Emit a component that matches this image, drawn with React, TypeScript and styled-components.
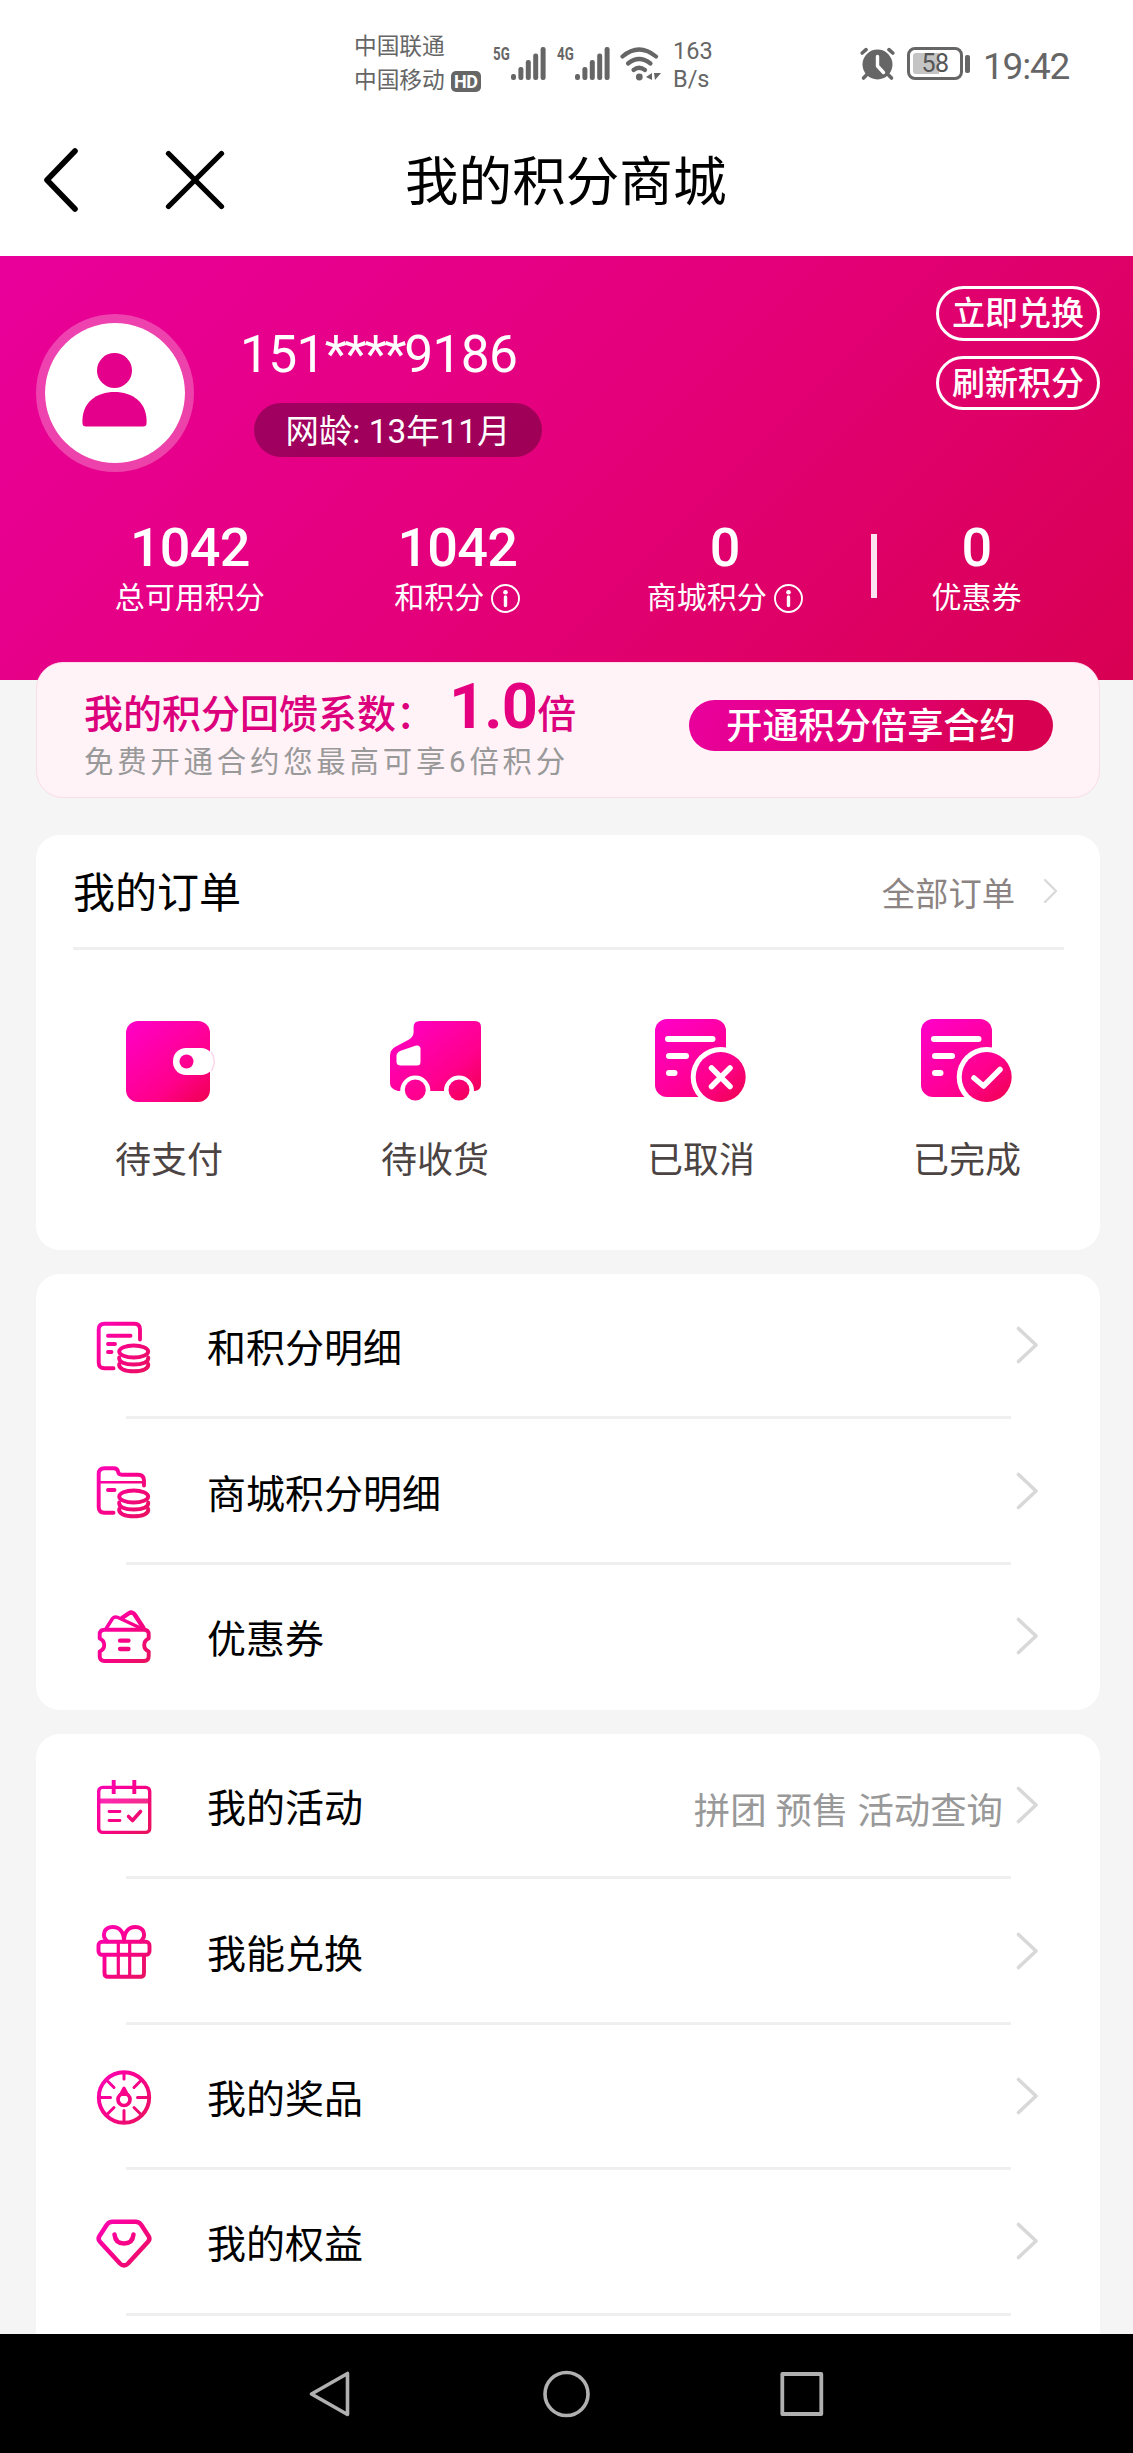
import React, { useId } from "react";
import styled, { createGlobalStyle } from "styled-components";

const GlobalStyle = createGlobalStyle`
  * { box-sizing: border-box; }
  body {
    margin: 0;
    background: #f5f5f5;
    font-family: Roboto, "Noto Sans CJK SC", sans-serif;
  }
  svg { display: block; flex: none; }
`;

const Page = styled.div`
  width: 1133px;
  height: 2453px;
  display: flex;
  flex-direction: column;
  overflow: hidden;
  background: #f5f5f5;
`;

/* ---------- status bar ---------- */

const StatusBar = styled.div`
  height: 127px;
  flex: none;
  display: flex;
  align-items: center;
  padding-left: 354px;
  background: #fff;
  color: #666;
`;

const Carriers = styled.div`
  width: 127px;
  padding-top: 1px;
  font-size: 22.7px;
  line-height: 34px;
`;

const CarrierLine = styled.div`
  display: flex;
  align-items: center;
  gap: 6px;
  white-space: nowrap;
`;

const HdBadge = styled.span`
  width: 30px;
  height: 21px;
  border-radius: 5px;
  background: #666;
  color: #fff;
  font: 700 18px/21px Roboto, sans-serif;
  letter-spacing: -0.5px;
  text-align: center;
`;

const Signal = styled.div<{ $left: number }>`
  display: flex;
  align-items: flex-start;
  height: 33px;
  margin-left: ${(p) => p.$left}px;
`;

const NetType = styled.span`
  width: 18px;
  font: 700 19px/14px Roboto, sans-serif;
  white-space: nowrap;
  transform: scaleX(0.7);
  transform-origin: left center;
`;

const WifiBox = styled.div`
  margin-left: 9px;
`;

const Speed = styled.div`
  width: 60px;
  margin-left: 12px;
  padding-top: 2px;
  font-size: 23.5px;
  line-height: 28px;
  font-weight: 400;
`;

const StatusRight = styled.div`
  display: flex;
  align-items: center;
  margin-left: 127px;
`;

const Battery = styled.div`
  width: 56px;
  height: 33px;
  margin-left: 12px;
  border: 3px solid #666;
  border-radius: 8px;
  padding: 3px;
`;

const BatteryFill = styled.div`
  width: 100%;
  height: 21px;
  border-radius: 3px;
  background: linear-gradient(90deg, #c4c4c4 58%, transparent 58%);
  color: #555;
  font-size: 25px;
  line-height: 22px;
  font-weight: 400;
  text-align: center;
  letter-spacing: -0.5px;
`;

const BatteryNub = styled.div`
  width: 5px;
  height: 18px;
  margin-left: 2px;
  border-radius: 2px;
  background: #666;
`;

const Clock = styled.div`
  margin-left: 13px;
  font-size: 37px;
  line-height: 40px;
  padding-top: 6px;
  letter-spacing: -1.2px;
`;

/* ---------- title bar ---------- */

const TitleBar = styled.header`
  height: 129px;
  flex: none;
  display: flex;
  align-items: center;
  padding: 0 0 23px 40px;
  background: #fff;
`;

const Title = styled.h1`
  margin: 0 0 0 177px;
  padding-top: 5px;
  font-size: 53.6px;
  line-height: 60px;
  font-weight: 400;
  color: #000;
`;

const CloseSlot = styled.div`
  margin-left: 80px;
`;

/* ---------- hero ---------- */

const Hero = styled.section`
  height: 424px;
  flex: none;
  background: linear-gradient(135deg, #e9009b 0%, #e4007a 50%, #d80052 100%);
  color: #fff;
`;

const Profile = styled.div`
  height: 255px;
  display: flex;
  align-items: flex-start;
  padding: 30px 33px 0 36px;
`;

const Avatar = styled.div`
  width: 158px;
  height: 158px;
  margin-top: 28px;
  border-radius: 50%;
  border: 9.5px solid rgba(255, 255, 255, 0.26);
  background: #fff;
  background-clip: padding-box;
`;

const Info = styled.div`
  margin: 41px 0 0 46px;
`;

const Phone = styled.div`
  padding-top: 1px;
  height: 54px;
  font-size: 51.5px;
  line-height: 54px;
  letter-spacing: -0.7px;
  white-space: nowrap;
`;

const Stars = styled.span`
  letter-spacing: -2.3px;
`;

const AgePill = styled.div`
  width: 288px;
  height: 54px;
  margin: 22px 0 0 14px;
  padding-top: 2px;
  border-radius: 27px;
  background: rgba(0, 0, 0, 0.3);
  font-size: 33.4px;
  line-height: 54px;
  text-align: center;
  white-space: nowrap;
`;

const Actions = styled.div`
  margin-left: auto;
  display: flex;
  flex-direction: column;
  gap: 15px;
`;

const OutlineButton = styled.button`
  width: 164px;
  height: 54.5px;
  padding: 2px 0 0;
  border: 3px solid #fff;
  border-radius: 28px;
  background: none;
  color: #fff;
  font: 500 33px/46px Roboto, "Noto Sans CJK SC", sans-serif;
`;

const Stats = styled.div`
  display: flex;
  padding-left: 56px;
`;

const Stat = styled.div<{ $width: number }>`
  width: ${(p) => p.$width}px;
  display: flex;
  flex-direction: column;
  align-items: center;
`;

const StatValue = styled.div`
  height: 70px;
  padding-top: 1px;
  font-size: 54px;
  line-height: 71px;
  font-weight: 500;
  letter-spacing: -0.8px;
`;

const StatLabel = styled.div`
  display: flex;
  align-items: center;
  gap: 7px;
  font-size: 30px;
  line-height: 34px;
`;

const StatDivider = styled.div`
  width: 6px;
  height: 64px;
  margin: 23px 0 0 12px;
  background: #fbe3f0;
`;

/* ---------- ratio card ---------- */

const RatioCard = styled.section`
  height: 136px;
  flex: none;
  margin: -18px 33px 0 36px;
  padding: 0 47px 0 47px;
  display: flex;
  justify-content: space-between;
  border: 1px solid #fbdcea;
  border-radius: 27px;
  background: #fff3f8;
`;

const RatioTitle = styled.div`
  height: 79px;
  display: flex;
  align-items: baseline;
  padding-top: 14px;
  color: #dc007d;
  font-size: 39px;
  line-height: 66px;
  font-weight: 500;
  white-space: nowrap;
`;

const RatioValue = styled.strong`
  margin-left: 14px;
  font-size: 63px;
  line-height: 60px;
  letter-spacing: -0.8px;
  font-weight: 700;
  color: #e4007f;
`;

const RatioNote = styled.div`
  padding-top: 1px;
  font-size: 29.4px;
  line-height: 38px;
  letter-spacing: 3.8px;
  color: #999;
  white-space: nowrap;
`;

const RatioButton = styled.button`
  width: 364px;
  height: 51px;
  margin-top: 37px;
  margin-right: -1px;
  padding: 3px 0 0;
  border: 0;
  border-radius: 26px;
  background: linear-gradient(110deg, #e9009d 0%, #e2007a 50%, #d80050 80%);
  color: #fff;
  font: 500 36.2px/48px Roboto, "Noto Sans CJK SC", sans-serif;
`;

/* ---------- cards ---------- */

const Card = styled.section<{ $top: number; $height: number; $open?: boolean }>`
  height: ${(p) => p.$height}px;
  flex: none;
  margin: ${(p) => p.$top}px 33px 0 36px;
  border-radius: ${(p) => (p.$open ? "24px 24px 0 0" : "24px")};
  background: #fff;
  overflow: hidden;
`;

const OrdersHead = styled.div`
  height: 115px;
  margin: 0 36px 0 37px;
  padding-right: 5px;
  display: flex;
  align-items: center;
  border-bottom: 3px solid #efefef;
`;

const OrdersTitle = styled.h2`
  margin: 0 auto 0 0;
  padding-top: 5px;
  font-size: 42px;
  line-height: 60px;
  font-weight: 400;
  color: #000;
`;

const OrdersAll = styled.span`
  padding-top: 7px;
  margin-right: 28px;
  font-size: 33.3px;
  line-height: 48px;
  color: #8b8483;
`;

const OrdersGrid = styled.div`
  display: grid;
  grid-template-columns: repeat(4, 1fr);
  padding-top: 62px;
`;

const OrderItem = styled.div`
  display: flex;
  flex-direction: column;
  align-items: center;
  color: #4c4443;
  font-size: 36px;
  line-height: 48px;
  gap: 29px;
`;

const Row = styled.div`
  position: relative;
  height: 145.4px;
  display: flex;
  align-items: center;
  padding: 0 61px 3px 57px;
`;

const Rule = styled.div`
  position: absolute;
  left: 90px;
  right: 89px;
  bottom: 0;
  height: 3px;
  background: #efefef;
`;

const RowLabel = styled.div`
  margin: 8px auto 0 54px;
  font-size: 39px;
  line-height: 56px;
  color: #000;
`;

const RowNote = styled.div`
  margin: 14px 12px 0 0;
  font-size: 36.4px;
  line-height: 50px;
  color: #999;
  white-space: pre;
`;

/* ---------- system navigation ---------- */

const SystemNav = styled.nav`
  height: 119px;
  margin-top: auto;
  flex: none;
  display: flex;
  align-items: center;
  justify-content: center;
  gap: 187px;
  background: #000;
`;

/* ---------- icons ---------- */

const SignalBars = () => (
  <svg width="36" height="33" viewBox="0 0 36 33" fill="#666">
    <rect x="0" y="27" width="5" height="6" rx="2.2" />
    <rect x="7.4" y="20" width="5" height="13" rx="2.2" />
    <rect x="14.8" y="13" width="5" height="20" rx="2.2" />
    <rect x="22.2" y="6.500" width="5" height="26.500" rx="2.2" />
    <rect x="29.6" y="0" width="5" height="33" rx="2.2" />
  </svg>
);

const WifiIcon = () => (
  <svg width="41" height="34" viewBox="0 0 41 34" fill="none" stroke="#666" strokeWidth="4.200" strokeLinecap="round">
    <path d="M2.500 9.500Q19 -4.500 36 9.500" />
    <path d="M8 16.500Q19 7.500 30.500 16.500" />
    <path d="M13.500 23Q19 18.500 25 23" />
    <circle cx="19.300" cy="30" r="3.400" fill="#666" stroke="none" />
    <path d="M32 26v7l-6-3zM34 26h7l-6 7z" fill="#666" stroke="none" />
  </svg>
);

const AlarmIcon = () => (
  <svg width="35" height="34" viewBox="0 0 35 34" fill="none" stroke="#666" strokeLinecap="round">
    <circle cx="17.500" cy="17.500" r="15" fill="#666" stroke="none" />
    <path d="M2.200 6 6 2.700M32.800 6 29 2.700" strokeWidth="3.600" />
    <path d="M6.500 28 3.500 31M28.500 28l3 3" strokeWidth="3.600" />
    <path d="M17.500 9.500v9.500l6 6.500" stroke="#fff" strokeWidth="3.400" strokeLinejoin="round" />
  </svg>
);

const BackIcon = () => (
  <svg width="42" height="70" viewBox="0 0 42 70" fill="none" stroke="#000" strokeWidth="5.600" strokeLinecap="round" strokeLinejoin="round">
    <path d="M35 6 7 35l28 29" />
  </svg>
);

const CloseIcon = () => (
  <svg width="66" height="66" viewBox="0 0 66 66" fill="none" stroke="#000" strokeWidth="5.300" strokeLinecap="round">
    <path d="M6.500 6.500l53 53M59.500 6.500l-53 53" />
  </svg>
);

const PersonIcon = () => (
  <svg width="139" height="139" viewBox="0 0 139 139" fill="#e4008a">
    <circle cx="69.500" cy="47.500" r="17.500" />
    <path d="M37.500 101C36 79 52 69 69.500 69S103 79 101.500 101Q101 103.500 98 103.500H41Q38 103.500 37.500 101Z" />
  </svg>
);

const InfoIcon = () => (
  <svg width="29" height="29" viewBox="0 0 29 29" fill="none" stroke="#fff">
    <circle cx="14.500" cy="14.500" r="13.500" strokeWidth="1.900" />
    <circle cx="14.500" cy="8.200" r="2.300" fill="#fff" stroke="none" />
    <path d="M14.500 13v8.500" strokeWidth="3.400" strokeLinecap="round" />
  </svg>
);

const Chevron = ({ small }: { small?: boolean }) =>
  small ? (
    <svg width="16" height="26" viewBox="0 0 16 26" fill="none" stroke="#dadada" strokeWidth="2.400" strokeLinecap="round" strokeLinejoin="round">
      <path d="M2 2l11 11L2 24" />
    </svg>
  ) : (
    <svg width="24" height="38" viewBox="0 0 24 38" fill="none" stroke="#d8d8d8" strokeWidth="3.600" strokeLinecap="round" strokeLinejoin="round">
      <path d="M3.500 2.500 21 19 3.500 35.500" />
    </svg>
  );

type Glyph = (paint: string) => React.ReactNode;

const SolidIcon = ({ glyph }: { glyph: Glyph }) => {
  const id = useId();
  return (
    <svg width="96" height="96" viewBox="0 0 96 96">
      <defs>
        <linearGradient id={id} gradientUnits="userSpaceOnUse" x1="15" y1="8" x2="86" y2="92">
          <stop offset="0" stopColor="#ff00c4" />
          <stop offset="0.65" stopColor="#ff008c" />
          <stop offset="1" stopColor="#f00050" />
        </linearGradient>
      </defs>
      {glyph(`url(#${id})`)}
    </svg>
  );
};

const wallet: Glyph = (paint) => (
  <>
    <rect x="5" y="9" width="84" height="81" rx="12" fill={paint} />
    <rect x="52" y="36" width="41" height="27" rx="13" fill="#fff" />
    <path d="M90.500 40Q96 49.500 90.500 59" fill="none" stroke="#fbd9ec" strokeWidth="1.500" />
    <circle cx="65.500" cy="49.500" r="7" fill={paint} />
  </>
);

const truck: Glyph = (paint) => (
  <>
    <path d="M33 9H88Q94 9 94 15V72Q94 78 88 79H11Q3 77 3 71V44Q3 38 8 35L22 27.500Q26.600 25 26.600 20V15Q26.600 9 33 9Z" fill={paint} />
    <path d="M9.500 43Q10 40.500 13 39L29 33.500Q33.500 33 33.500 37V50Q33.500 53.500 30 53.500H13Q9.500 53 9.500 50Z" fill="#fff" />
    <circle cx="28.300" cy="78.500" r="15" fill="#fff" />
    <circle cx="72" cy="78.500" r="15" fill="#fff" />
    <circle cx="28.300" cy="78" r="10.500" fill={paint} />
    <circle cx="72" cy="78" r="10.500" fill={paint} />
  </>
);

const order = (mark: string): Glyph => (paint) => (
  <>
    <rect x="2" y="7" width="71" height="78" rx="12" fill={paint} />
    <path d="M15 27h44.500M16 44h17M16 61h5.500" stroke="#fff" strokeWidth="6" strokeLinecap="round" />
    <circle cx="67.700" cy="65" r="30" fill="#fff" />
    <circle cx="67.700" cy="65" r="25" fill={paint} />
    <path d={mark} fill="none" stroke="#fff" strokeWidth="5.500" strokeLinecap="round" strokeLinejoin="round" />
  </>
);

const LineIcon = ({ glyph, weight = 3.9 }: { glyph: React.ReactNode; weight?: number }) => {
  const id = useId();
  return (
    <IconSlot>
      <svg
        width="60"
        height="60"
        viewBox="0 0 60 60"
        fill="none"
        stroke={`url(#${id})`}
        strokeWidth={weight}
        strokeLinecap="round"
        strokeLinejoin="round"
      >
        <defs>
          <linearGradient id={id} gradientUnits="userSpaceOnUse" x1="4" y1="10" x2="56" y2="54">
            <stop offset="0" stopColor="#fb06b4" />
            <stop offset="0.4" stopColor="#fb0090" />
            <stop offset="1" stopColor="#e8125e" />
          </linearGradient>
        </defs>
        {glyph}
      </svg>
    </IconSlot>
  );
};

const IconSlot = styled.div`
  padding-top: 3px;
`;

const coins = (
  <>
    <ellipse cx="40.700" cy="34.500" rx="14.500" ry="6" />
    <path d="M26.200 40.500c-.8 4.500 5.800 7 14.500 7s15.300-2.500 14.500-7" />
    <path d="M26.200 47c-.8 4.800 5.800 7.300 14.500 7.300s15.300-2.500 14.500-7.300" />
  </>
);

const pointsDoc = (
  <>
    <path d="M20.500 51.300H11.500Q5.700 51.300 5.700 45.500V12.500Q5.700 6.700 11.500 6.700H41.500Q47 6.700 47 12.500V22.500" />
    <path d="M15 18.700H37.500M15 27H22M15 35H18.500" />
    {coins}
  </>
);

const pointsFolder = (
  <>
    <path d="M20.500 50.700H11.500Q5.700 50.700 5.700 45V12Q5.700 6.300 11.500 6.300H20.500Q24.500 6.300 25 9.500T29 12.700H45Q51 12.700 51 18.500V23.500" />
    <path d="M6 20.300H50" strokeWidth="2.600" />
    <path d="M15 28H21.500" />
    {coins}
  </>
);

const coupon = (
  <>
    <path d="M11.500 22.700H51Q55.700 22.700 55.700 27.500V31.500Q51.200 33.500 51.200 38T55.700 44.500V49Q55.700 54 51 54H11.500Q6.700 54 6.700 49V44.500Q11.200 42.500 11.200 38T6.700 31.500V27.500Q6.700 22.700 11.500 22.700Z" />
    <path d="M27 33.700H35.500M27 42H35.500" strokeWidth="4.300" />
    <path d="M13.500 21 19.500 11.500Q21.500 9 25 10.500L48.500 21.500" strokeWidth="3.500" />
    <path d="M29 11 35.500 6.500Q39.500 4 42 8L50.500 21" strokeWidth="4.400" />
  </>
);

const calendar = (
  <>
    <rect x="5.700" y="10.400" width="51" height="45" rx="4" strokeWidth="3.400" />
    <path d="M6 24H56" strokeWidth="4.800" strokeOpacity="0.85" strokeLinecap="butt" />
    <path d="M20.700 3V17M41.300 3V17" strokeLinecap="butt" />
    <path d="M16 34.500H27M16 43.500H27" strokeWidth="2.800" />
    <path d="M35.500 39.500 39.500 43.500 47.500 34.500" strokeWidth="3.600" />
  </>
);

const gift = (
  <>
    <rect x="5.500" y="19.800" width="51" height="13" rx="3.500" />
    <path d="M11.500 33V51Q11.500 54.800 15 54.800H47.500Q51 54.800 51 51V33" />
    <path d="M25.300 20V54M36.700 20V54" strokeWidth="3.200" />
    <path d="M14.500 19.500C8 14 11 5 19.500 5S31 12 31 19.500C31 12 34 5 42.500 5S54 14 47.500 19.500" />
  </>
);

const wheel = (
  <>
    <circle cx="31" cy="30.500" r="25.200" />
    <path
      d="M31 6V12M31 55V43.500M6 30.500H17.500M56 30.500H44.500M13.500 13 21 20.500M48.500 13 41 20.500M13.500 48 21 40.500M48.500 48 41 40.500"
      strokeWidth="3"
    />
    <circle cx="31" cy="32.500" r="6" strokeWidth="3.700" />
    <path d="M31 21 27.500 27.500H34.500Z" strokeWidth="3" fill="#f5068a" />
  </>
);

const diamond = (
  <>
    <path d="M19.500 8.800H42.500Q46 8.800 48 11.500L55.500 23Q57.500 26 55 28.800L35 50.500Q31 54.500 27 50.500L7 28.800Q4.500 26 6.500 23L14 11.500Q16 8.800 19.500 8.800Z" />
    <path d="M21.500 21.500Q22.500 30.500 31 30.500T40.500 21.500" />
  </>
);

/* ---------- data ---------- */

const orders: { label: string; glyph: Glyph }[] = [
  { label: "待支付", glyph: wallet },
  { label: "待收货", glyph: truck },
  { label: "已取消", glyph: order("M58.500 56l18.500 18.500M77 56 58.500 74.500") },
  { label: "已完成", glyph: order("M55 66 64.500 74 81 57.500") },
];

interface Entry {
  label: string;
  icon: React.ReactNode;
  note?: string;
  weight?: number;
}

const pointEntries: Entry[] = [
  { label: "和积分明细", icon: pointsDoc },
  { label: "商城积分明细", icon: pointsFolder },
  { label: "优惠券", icon: coupon },
];

const myEntries: Entry[] = [
  { label: "我的活动", icon: calendar, note: "拼团 预售 活动查询" },
  { label: "我能兑换", icon: gift },
  { label: "我的奖品", icon: wheel },
  { label: "我的权益", icon: diamond, weight: 4.5 },
];

const EntryRow = ({ entry, last }: { entry: Entry; last?: boolean }) => (
  <Row>
    <LineIcon glyph={entry.icon} weight={entry.weight} />
    <RowLabel>{entry.label}</RowLabel>
    {entry.note && <RowNote>{entry.note}</RowNote>}
    <Chevron />
    {!last && <Rule />}
  </Row>
);

export default function App() {
  return (
    <>
      <GlobalStyle />
      <Page>
        <StatusBar>
          <Carriers>
            <CarrierLine>中国联通</CarrierLine>
            <CarrierLine>
              中国移动<HdBadge>HD</HdBadge>
            </CarrierLine>
          </Carriers>
          <Signal $left={12}>
            <NetType>5G</NetType>
            <SignalBars />
          </Signal>
          <Signal $left={10}>
            <NetType>4G</NetType>
            <SignalBars />
          </Signal>
          <WifiBox>
            <WifiIcon />
          </WifiBox>
          <Speed>
            163
            <br />
            B/s
          </Speed>
          <StatusRight>
            <AlarmIcon />
            <Battery>
              <BatteryFill>58</BatteryFill>
            </Battery>
            <BatteryNub />
            <Clock>19:42</Clock>
          </StatusRight>
        </StatusBar>

        <TitleBar>
          <BackIcon />
          <CloseSlot>
            <CloseIcon />
          </CloseSlot>
          <Title>我的积分商城</Title>
        </TitleBar>

        <Hero>
          <Profile>
            <Avatar>
              <PersonIcon />
            </Avatar>
            <Info>
              <Phone>
                151<Stars>****</Stars>9186
              </Phone>
              <AgePill>网龄: 13年11月</AgePill>
            </Info>
            <Actions>
              <OutlineButton>立即兑换</OutlineButton>
              <OutlineButton>刷新积分</OutlineButton>
            </Actions>
          </Profile>
          <Stats>
            <Stat $width={267.5}>
              <StatValue>1042</StatValue>
              <StatLabel>总可用积分</StatLabel>
            </Stat>
            <Stat $width={267.5}>
              <StatValue>1042</StatValue>
              <StatLabel>
                和积分
                <InfoIcon />
              </StatLabel>
            </Stat>
            <Stat $width={267.5}>
              <StatValue>0</StatValue>
              <StatLabel>
                商城积分
                <InfoIcon />
              </StatLabel>
            </Stat>
            <StatDivider />
            <Stat $width={200}>
              <StatValue>0</StatValue>
              <StatLabel>优惠券</StatLabel>
            </Stat>
          </Stats>
        </Hero>

        <RatioCard>
          <div>
            <RatioTitle>
              我的积分回馈系数：<RatioValue>1.0</RatioValue>倍
            </RatioTitle>
            <RatioNote>免费开通合约您最高可享6倍积分</RatioNote>
          </div>
          <RatioButton>开通积分倍享合约</RatioButton>
        </RatioCard>

        <Card $top={37} $height={415}>
          <OrdersHead>
            <OrdersTitle>我的订单</OrdersTitle>
            <OrdersAll>全部订单</OrdersAll>
            <Chevron small />
          </OrdersHead>
          <OrdersGrid>
            {orders.map((item) => (
              <OrderItem key={item.label}>
                <SolidIcon glyph={item.glyph} />
                {item.label}
              </OrderItem>
            ))}
          </OrdersGrid>
        </Card>

        <Card $top={24} $height={436}>
          {pointEntries.map((entry, i) => (
            <EntryRow key={entry.label} entry={entry} last={i === pointEntries.length - 1} />
          ))}
        </Card>

        <Card $top={24} $height={600} $open>
          {myEntries.map((entry) => (
            <EntryRow key={entry.label} entry={entry} />
          ))}
        </Card>

        <SystemNav>
          <svg width="48" height="48" viewBox="0 0 48 48" fill="none" stroke="#b0b0b0" strokeWidth="3.600" strokeLinejoin="round">
            <path d="M39.500 3.500V44.500L3.500 24Z" />
          </svg>
          <svg width="48" height="48" viewBox="0 0 48 48" fill="none" stroke="#b0b0b0" strokeWidth="3.600">
            <circle cx="23.500" cy="24" r="21.500" />
          </svg>
          <svg width="48" height="48" viewBox="0 0 48 48" fill="none" stroke="#b0b0b0" strokeWidth="3.800" strokeLinejoin="round">
            <rect x="4.300" y="4" width="39" height="40" />
          </svg>
        </SystemNav>
      </Page>
    </>
  );
}
